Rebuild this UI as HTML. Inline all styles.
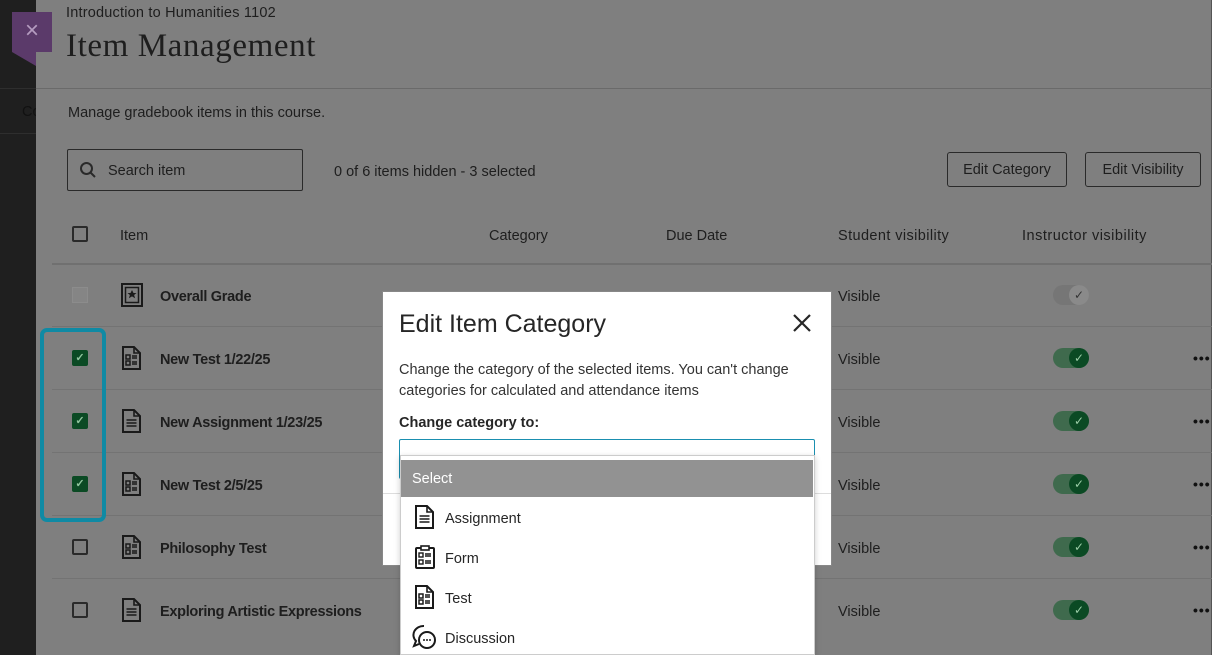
<!DOCTYPE html>
<html><head><meta charset="utf-8"><style>
*{box-sizing:border-box;margin:0;padding:0}
body{width:1212px;height:655px;overflow:hidden;background:#7f7f7f;font-family:"Liberation Sans",sans-serif;color:#1e1e1e;position:relative}
.abs{position:absolute}
.strip{left:0;top:0;width:36px;height:655px;background:#1f1f1f}
.t{position:absolute;font-size:14.5px;color:#1e1e1e;white-space:nowrap;margin-top:2px}
.b{font-weight:bold;letter-spacing:-0.3px}
.line{position:absolute;left:52px;right:0;height:1px;background:#737373}
.cb{position:absolute;left:72px;width:16px;height:16px;border:2px solid #2a2a2a;border-radius:2px}
.cbc{position:absolute;left:72px;width:16px;height:16px;background:#0b4a24;border-radius:2px;color:#8fc49d;font-size:11px;line-height:16px;text-align:center;font-weight:bold}
.tog{position:absolute;left:1053px;width:36px;height:20px;border-radius:10px;background:#3f6a4d}
.tog i{position:absolute;right:0;top:0;width:20px;height:20px;border-radius:50%;background:#0b4a24;color:#9acca6;font-style:normal;font-size:12px;line-height:20px;text-align:center}
.dots{position:absolute;left:1193px;font-size:14px;font-weight:bold;letter-spacing:1px;color:#111}
.btn{position:absolute;top:152px;height:35px;border:1px solid #2a2a2a;border-radius:3px;font-size:14.5px;line-height:35px;text-align:center}
.ic{position:absolute}
</style></head><body>
<div class="abs strip"></div>
<div class="abs" style="left:0;top:88px;width:36px;height:1px;background:#2e2e2e"></div>
<div class="abs" style="left:0;top:133px;width:36px;height:1px;background:#2e2e2e"></div>
<div class="t" style="left:22px;top:102px;color:#111">Co</div>
<div class="abs" style="left:36px;top:0;width:1176px;height:655px;background:#7f7f7f;border-right:1px solid #555"></div>
<div class="abs" style="left:12px;top:12px;width:40px;height:40px;background:#5b3a6a;color:#b59cc0;font-size:24px;text-align:center;line-height:38px">×</div>
<div class="abs" style="left:12px;top:52px;width:0;height:0;border-left:24px solid transparent;border-top:14px solid #5b3a6a;left:12px"></div>
<div class="t" style="left:66px;top:3px;font-size:14.5px;letter-spacing:0.2px">Introduction to Humanities 1102</div>
<div class="t" style="left:66px;top:26px;font-family:'Liberation Serif',serif;font-size:33px;letter-spacing:0.6px">Item Management</div>
<div class="abs" style="left:36px;top:88px;width:1176px;height:1px;background:#6a6a6a"></div>
<div class="t" style="left:68px;top:103px">Manage gradebook items in this course.</div>
<div class="abs" style="left:67px;top:149px;width:236px;height:42px;border:1px solid #2a2a2a;border-radius:2px"></div>
<svg class="ic" style="left:79px;top:161px" width="18" height="18" viewBox="0 0 18 18"><circle cx="7.5" cy="7.5" r="5.5" fill="none" stroke="#2a2a2a" stroke-width="2"/><path d="M11.5 11.5L16 16" stroke="#2a2a2a" stroke-width="2"/></svg>
<div class="t" style="left:108px;top:161px">Search item</div>
<div class="t" style="left:334px;top:162px">0 of 6 items hidden - 3 selected</div>
<div class="btn" style="left:947px;width:120px">Edit Category</div>
<div class="btn" style="left:1085px;width:116px">Edit Visibility</div>

<div class="cb" style="top:226px"></div>
<div class="t" style="left:120px;top:226px">Item</div>
<div class="t" style="left:489px;top:226px">Category</div>
<div class="t" style="left:666px;top:226px">Due Date</div>
<div class="t" style="left:838px;top:226px;letter-spacing:0.4px">Student visibility</div>
<div class="t" style="left:1022px;top:226px;letter-spacing:0.5px">Instructor visibility</div>
<div class="line" style="top:263px;height:2px;background:#707070"></div>
<div class="line" style="top:326px"></div>
<div class="line" style="top:389px"></div>
<div class="line" style="top:452px"></div>
<div class="line" style="top:515px"></div>
<div class="line" style="top:578px"></div>

<div class="abs" style="left:72px;top:287px;width:16px;height:16px;background:#858585;border:1px solid #8c8c8c"></div>
<div class="cbc" style="top:350px">✓</div>
<div class="cbc" style="top:413px">✓</div>
<div class="cbc" style="top:476px">✓</div>
<div class="cb" style="top:539px"></div>
<div class="cb" style="top:602px"></div>
<div class="abs" style="left:40px;top:328px;width:66px;height:194px;border:4px solid #0f8aa4;border-radius:7px"></div>

<svg class="ic" style="left:121px;top:283px" width="22" height="24" viewBox="0 0 22 24"><rect x="1" y="1" width="20" height="22" fill="none" stroke="#1a1a1a" stroke-width="2"/><rect x="4.5" y="4.5" width="13" height="15" fill="none" stroke="#1a1a1a" stroke-width="1.5"/><path d="M11 7l1.5 3h3l-2.4 2 1 3.2L11 13.4 7.9 15.2l1-3.2L6.5 10h3z" fill="#1a1a1a"/></svg>
<svg width="0" height="0" style="position:absolute"><defs>
<g id="test"><path d="M2 1h11l6 6v16H2z" fill="none" stroke="#1a1a1a" stroke-width="2"/><path d="M13 1v6h6" fill="none" stroke="#1a1a1a" stroke-width="1.6"/><rect x="5" y="9" width="4" height="4" fill="none" stroke="#1a1a1a" stroke-width="1.5"/><rect x="5" y="15" width="4" height="4" fill="none" stroke="#1a1a1a" stroke-width="1.5"/><path d="M11 10h5M11 12h5M11 16h5M11 18h5" stroke="#1a1a1a" stroke-width="1.4"/></g>
<g id="asg"><path d="M2 1h11l6 6v16H2z" fill="none" stroke="#1a1a1a" stroke-width="2"/><path d="M13 1v6h6" fill="none" stroke="#1a1a1a" stroke-width="1.6"/><path d="M5.5 11h10M5.5 14h10M5.5 17h10" stroke="#1a1a1a" stroke-width="1.6"/></g>
</defs></svg>
<svg class="ic" style="left:121px;top:346px" width="22" height="24"><use href="#test"/></svg>
<svg class="ic" style="left:121px;top:409px" width="22" height="24"><use href="#asg"/></svg>
<svg class="ic" style="left:121px;top:472px" width="22" height="24"><use href="#test"/></svg>
<svg class="ic" style="left:121px;top:535px" width="22" height="24"><use href="#test"/></svg>
<svg class="ic" style="left:121px;top:598px" width="22" height="24"><use href="#asg"/></svg>

<div class="t b" style="left:160px;top:287px">Overall Grade</div>
<div class="t b" style="left:160px;top:350px">New Test 1/22/25</div>
<div class="t b" style="left:160px;top:413px">New Assignment 1/23/25</div>
<div class="t b" style="left:160px;top:476px">New Test 2/5/25</div>
<div class="t b" style="left:160px;top:539px">Philosophy Test</div>
<div class="t b" style="left:160px;top:602px">Exploring Artistic Expressions</div>

<div class="t" style="left:838px;top:287px">Visible</div>
<div class="t" style="left:838px;top:350px">Visible</div>
<div class="t" style="left:838px;top:413px">Visible</div>
<div class="t" style="left:838px;top:476px">Visible</div>
<div class="t" style="left:838px;top:539px">Visible</div>
<div class="t" style="left:838px;top:602px">Visible</div>

<div class="tog" style="top:285px;background:#767676"><i style="background:#8a8a8a;color:#333">✓</i></div>
<div class="tog" style="top:348px"><i>✓</i></div>
<div class="tog" style="top:411px"><i>✓</i></div>
<div class="tog" style="top:474px"><i>✓</i></div>
<div class="tog" style="top:537px"><i>✓</i></div>
<div class="tog" style="top:600px"><i>✓</i></div>
<div class="dots" style="top:350px">•••</div>
<div class="dots" style="top:413px">•••</div>
<div class="dots" style="top:476px">•••</div>
<div class="dots" style="top:539px">•••</div>
<div class="dots" style="top:602px">•••</div>

<div class="abs" style="left:382px;top:291px;width:450px;height:275px;background:#fff;border:1px solid #888"></div>
<div class="t" style="left:399px;top:308px;font-size:25px;color:#262626">Edit Item Category</div>
<svg class="ic" style="left:792px;top:313px" width="20" height="20"><path d="M2 2L18 18M18 2L2 18" stroke="#262626" stroke-width="2.2"/></svg>
<div class="t" style="left:399px;top:358px;font-size:14.5px;color:#333;line-height:21px">Change the category of the selected items. You can't change<br>categories for calculated and attendance items</div>
<div class="t b" style="left:399px;top:413px;color:#262626;letter-spacing:0">Change category to:</div>
<div class="abs" style="left:399px;top:439px;width:416px;height:40px;border:1px solid #1a8fb0;border-radius:2px;background:#fff"></div>
<div class="abs" style="left:383px;top:493px;width:448px;height:1px;background:#ddd"></div>
<div class="abs" style="left:813px;top:510px;width:2px;height:38px;background:#333"></div>
<div class="abs" style="left:400px;top:455px;width:415px;height:200px;background:#fff;border:1px solid #ccc;box-shadow:0 2px 6px rgba(0,0,0,.2)"></div>
<div class="abs" style="left:401px;top:460px;width:412px;height:37px;background:#929292"></div>
<div class="t" style="left:412px;top:469px;color:#fff">Select</div>
<svg class="ic" style="left:414px;top:505px" width="22" height="24"><use href="#asg"/></svg>
<svg class="ic" style="left:414px;top:545px" width="22" height="24" viewBox="0 0 22 24"><rect x="2" y="3" width="18" height="20" rx="1" fill="none" stroke="#1a1a1a" stroke-width="2"/><rect x="7" y="1" width="8" height="4" fill="#fff" stroke="#1a1a1a" stroke-width="1.6"/><rect x="5" y="8" width="4" height="4" fill="none" stroke="#1a1a1a" stroke-width="1.4"/><rect x="5" y="15" width="4" height="4" fill="none" stroke="#1a1a1a" stroke-width="1.4"/><path d="M11 9h6M11 11h6M11 16h6M11 18h6" stroke="#1a1a1a" stroke-width="1.4"/></svg>
<svg class="ic" style="left:414px;top:585px" width="22" height="24"><use href="#test"/></svg>
<svg class="ic" style="left:412px;top:624px" width="26" height="26" viewBox="0 0 26 26"><path d="M12 2a10 9 0 0 0-8 15l-2 5 5-2" fill="none" stroke="#1a1a1a" stroke-width="2"/><circle cx="15" cy="16" r="8" fill="#fff" stroke="#1a1a1a" stroke-width="2"/><circle cx="12" cy="16" r="1" fill="#1a1a1a"/><circle cx="15" cy="16" r="1" fill="#1a1a1a"/><circle cx="18" cy="16" r="1" fill="#1a1a1a"/></svg>
<div class="t" style="left:445px;top:509px;color:#262626">Assignment</div>
<div class="t" style="left:445px;top:549px;color:#262626">Form</div>
<div class="t" style="left:445px;top:589px;color:#262626">Test</div>
<div class="t" style="left:445px;top:629px;color:#262626">Discussion</div>
</body></html>
